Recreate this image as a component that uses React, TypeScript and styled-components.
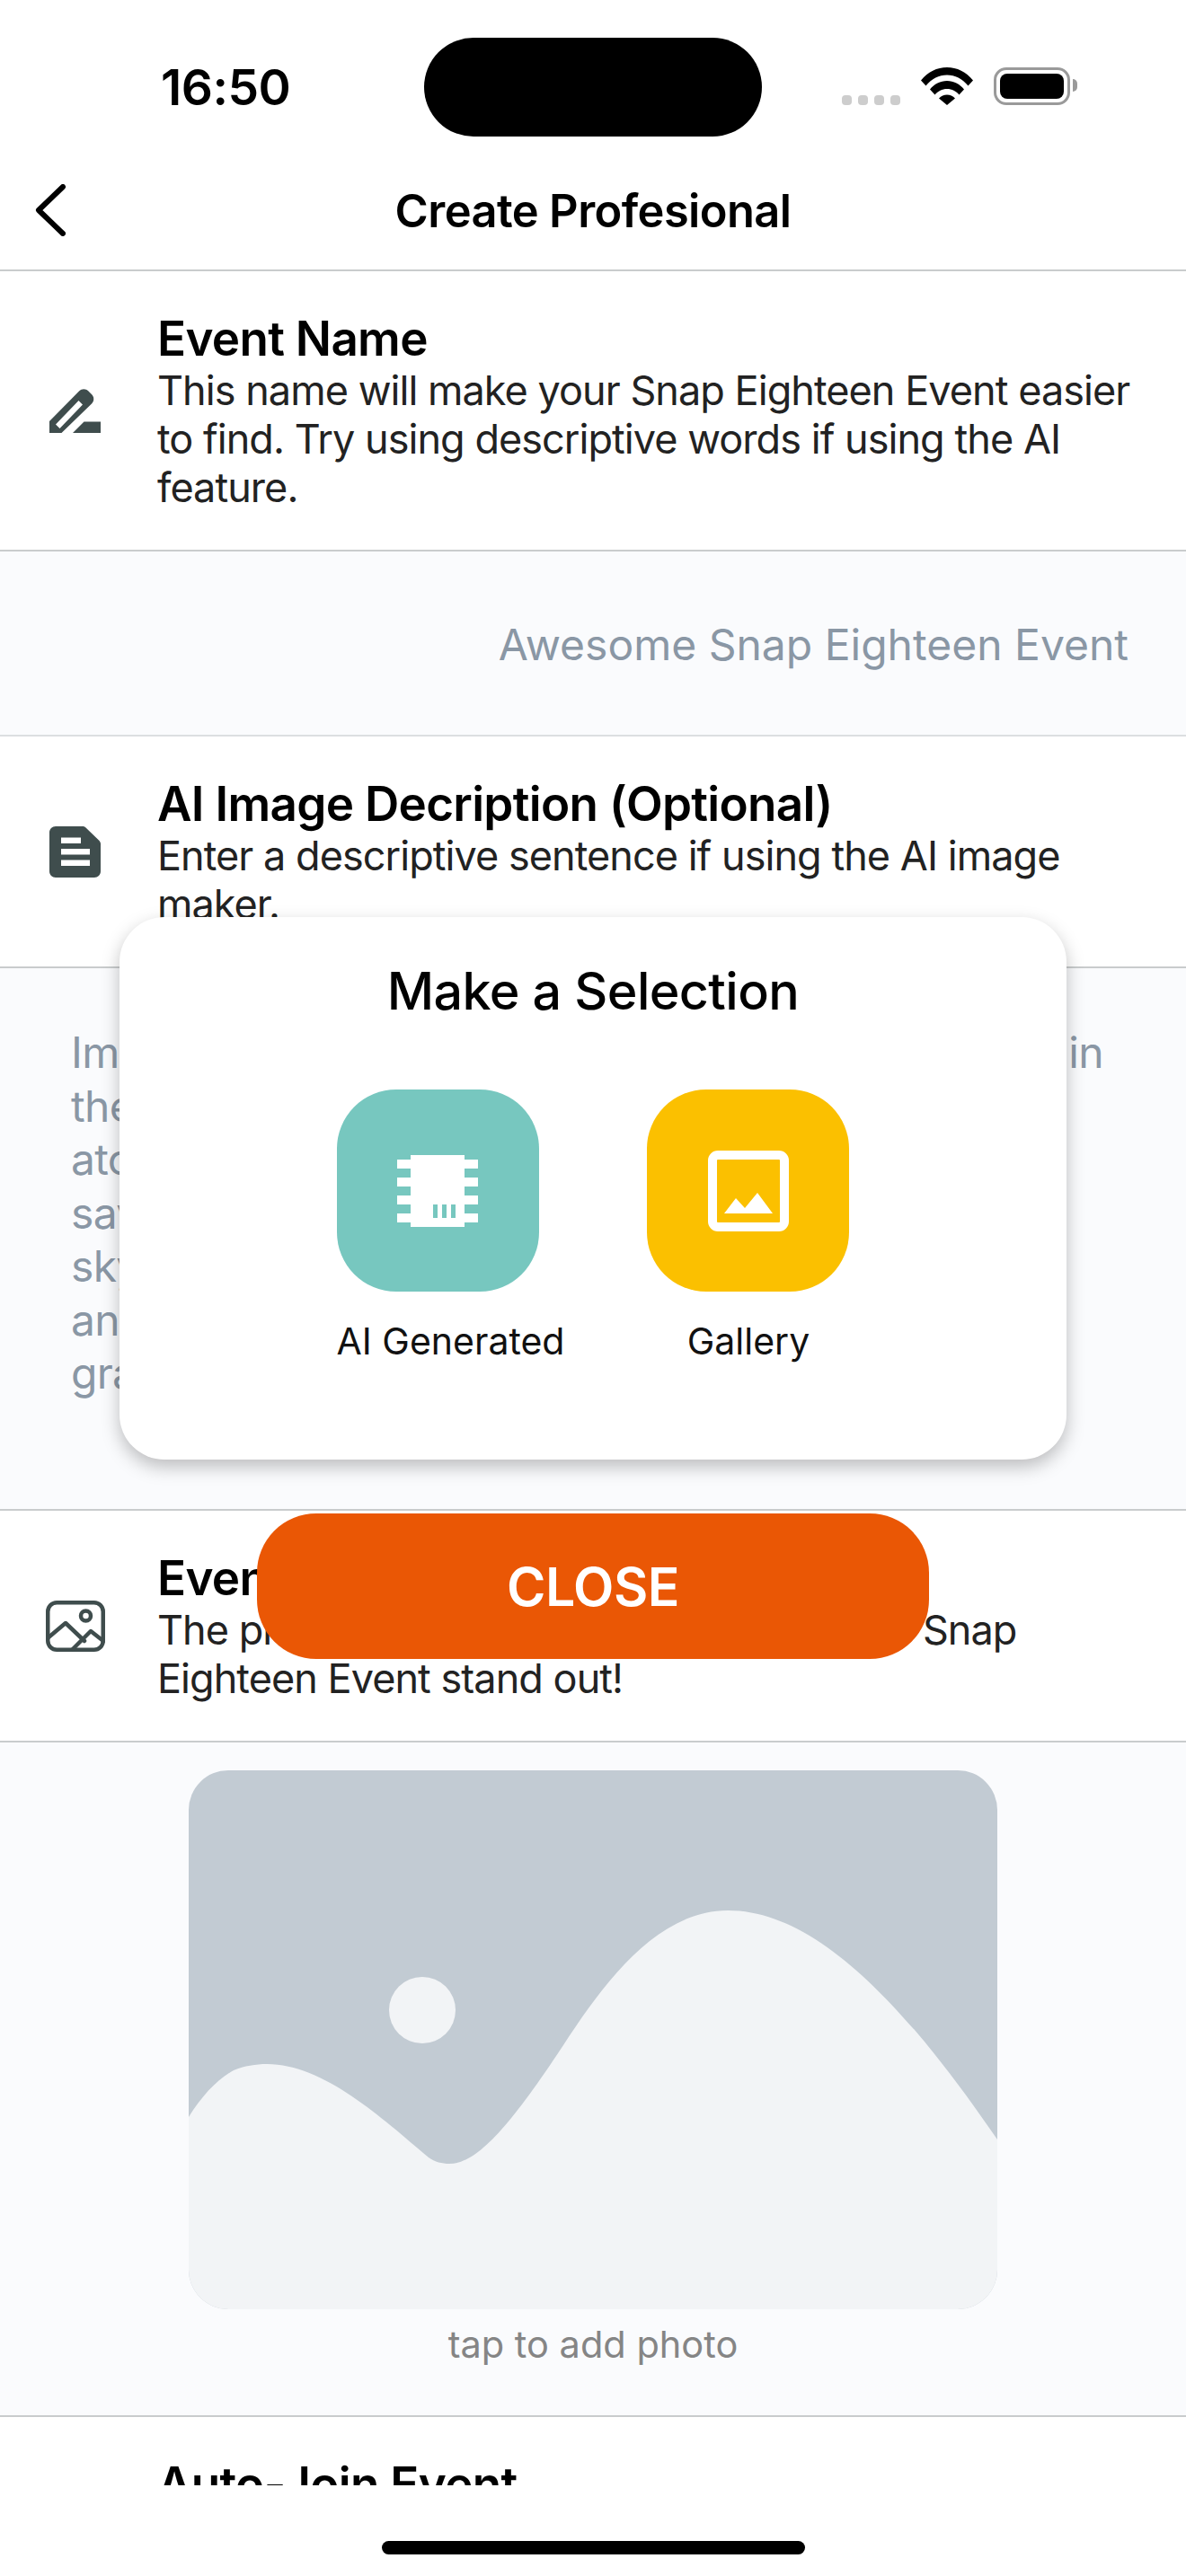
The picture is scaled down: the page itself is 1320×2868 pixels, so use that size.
import React from "react";
import styled, { createGlobalStyle } from "styled-components";

const Global = createGlobalStyle`
  html, body { margin: 0; padding: 0; background: #fff; }
  body { font-family: Inter, "Liberation Sans", sans-serif; }
`;

const Page = styled.div`
  position: relative;
  width: 1320px;
  height: 2868px;
  display: flex;
  flex-direction: column;
  overflow: hidden;
  background: #fff;
`;

const StatusBar = styled.div`
  height: 170px;
  flex: none;
  box-sizing: border-box;
  padding: 42px 123px 0 179px;
  display: flex;
  align-items: flex-start;
`;

const Time = styled.div`
  width: 293px;
  height: 110px;
  display: flex;
  align-items: center;
  font-size: 55px;
  font-weight: 600;
  letter-spacing: -0.5px;
  color: #000;
`;

const Island = styled.div`
  width: 376px;
  height: 110px;
  border-radius: 55px;
  background: #000;
`;

const StatusIcons = styled.div`
  margin-left: 89px;
  padding-top: 33px;
  display: flex;
  align-items: flex-start;
`;

const Dots = styled.div`
  display: flex;
  gap: 7px;
  margin-top: 31px;
  margin-right: 23px;
`;

const Dot = styled.span`
  width: 11px;
  height: 11px;
  border-radius: 4px;
  background: #cdcdcd;
`;

const Battery = styled.div`
  position: relative;
  margin-left: 23px;
  width: 85px;
  height: 42px;
  box-sizing: border-box;
  border: 3px solid #9a9a9a;
  border-radius: 14px;
  padding: 4px;

  &::before {
    content: "";
    display: block;
    width: 100%;
    height: 100%;
    border-radius: 8px;
    background: #000;
  }

  &::after {
    content: "";
    position: absolute;
    right: -11px;
    top: 10px;
    width: 5px;
    height: 14px;
    border-radius: 0 6px 6px 0;
    background: #9a9a9a;
  }
`;

const Header = styled.div`
  position: relative;
  height: 132px;
  flex: none;
  box-sizing: border-box;
  border-bottom: 2px solid #c9cccd;
  display: flex;
  align-items: center;
  justify-content: center;
  padding-bottom: 2px;
`;

const BackIcon = styled.svg`
  position: absolute;
  left: 38px;
  top: 35px;
`;

const Title = styled.div`
  font-size: 50.6px;
  font-weight: 600;
  letter-spacing: -0.6px;
  color: #000;
`;

const Scroll = styled.div`
  flex: 1;
  min-height: 0;
  overflow: hidden;
`;

const Section = styled.div`
  display: flex;
  align-items: center;
  padding: 0 40px 0 50px;
  border-bottom: 2px solid #c9cccd;
`;

const IconSlot = styled.div`
  width: 67px;
  flex: none;
  margin-right: 58px;
  display: flex;
  justify-content: center;
`;

const SectionText = styled.div`
  flex: 1;
  padding: 45px 0 42px;
`;

const SectionTitle = styled.div`
  font-size: 53px;
  line-height: 60px;
  font-weight: 600;
  letter-spacing: -0.7px;
  color: #000;
  margin-bottom: 1px;
`;

const SectionBody = styled.div`
  font-size: 45px;
  line-height: 54px;
  letter-spacing: -0.95px;
  color: #222;
`;

const NameField = styled.div`
  height: 206px;
  box-sizing: border-box;
  background: #fafbfd;
  border-bottom: 2px solid #dcdfe1;
  padding: 2px 64px 0 0;
  display: flex;
  align-items: center;
  justify-content: flex-end;
  font-size: 48px;
  color: #8a97a5;
`;

const DescriptionField = styled.div`
  background: #fafbfd;
  border-bottom: 2px solid #c9cccd;
  padding: 64px 60px 121.5px 79px;
  font-size: 48px;
  line-height: 59.5px;
  letter-spacing: -0.7px;
  color: #8a97a5;
  white-space: nowrap;
`;

const PhotoField = styled.div`
  background: #fafbfd;
  border-bottom: 2px solid #c9cccd;
  padding: 31px 0 0;
  height: 751px;
  box-sizing: border-box;
  display: flex;
  flex-direction: column;
  align-items: center;
`;

const PhotoBox = styled.svg`
  display: block;
  width: 900px;
  height: 600px;
  border-radius: 44px;
`;

const PhotoHint = styled.div`
  margin-top: 14px;
  font-size: 41.5px;
  line-height: 50px;
  color: #858585;
`;

const Footer = styled.div`
  height: 101px;
  flex: none;
  display: flex;
  justify-content: center;
  padding-top: 62px;
  box-sizing: border-box;
`;

const HomeBar = styled.div`
  width: 471px;
  height: 15px;
  border-radius: 8px;
  background: #000;
`;

const Modal = styled.div`
  position: absolute;
  left: 133px;
  top: 1021px;
  width: 1054px;
  height: 604px;
  box-sizing: border-box;
  background: #fff;
  border-radius: 50px;
  box-shadow: 0 8px 20px rgba(0, 0, 0, 0.25);
  padding-top: 48px;
  display: flex;
  flex-direction: column;
  align-items: center;
`;

const ModalTitle = styled.div`
  font-size: 57.4px;
  line-height: 68px;
  font-weight: 500;
  letter-spacing: -0.6px;
  color: #000;
`;

const Options = styled.div`
  margin-top: 76px;
  display: flex;
  gap: 92px;
`;

const Option = styled.div<{ $center?: boolean }>`
  display: flex;
  flex-direction: column;
  align-items: ${({ $center }) => ($center ? "center" : "flex-start")};
`;

const OptionTile = styled.div<{ $color: string }>`
  width: 225px;
  height: 225px;
  border-radius: 66px;
  background: ${({ $color }) => $color};
  display: flex;
  align-items: center;
  justify-content: center;
`;

const OptionLabel = styled.div`
  margin-top: 30px;
  font-size: 41px;
  line-height: 50px;
  color: #111;
  white-space: nowrap;
`;

const CloseButton = styled.button`
  position: absolute;
  left: 286px;
  top: 1685px;
  width: 748px;
  height: 162px;
  border: 0;
  padding: 0;
  border-radius: 66px;
  background: #ea5705;
  color: #fff;
  font-family: inherit;
  font-size: 59px;
  font-weight: 600;
  letter-spacing: -0.5px;
`;

const iconColor = "#3f4d4d";

const App: React.FC = () => {
  return (
    <Page>
      <Global />
      <StatusBar>
        <Time>16:50</Time>
        <Island />
        <StatusIcons>
          <Dots>
            <Dot />
            <Dot />
            <Dot />
            <Dot />
          </Dots>
          <svg width="58" height="42" viewBox="0 0 58 42">
            <path d="M0 14.500C7.500 5 18 0 29 0s21.500 5 29 14.500l-5.500 6C46 12.500 38 8.500 29 8.500S12 12.500 5.500 20.500Z" fill="#000" />
            <path d="M10 24.500C15 18.500 21.500 15 29 15s14 3.500 19 9.500l-5.500 6C39 26.500 34.500 24 29 24s-10 2.500-13.500 6.500Z" fill="#000" />
            <path d="M20 34.500c2.500-2.500 5.500-4 9-4s6.500 1.500 9 4L29 42Z" fill="#000" />
          </svg>
          <Battery />
        </StatusIcons>
      </StatusBar>

      <Header>
        <BackIcon width="36" height="58" viewBox="0 0 36 58">
          <path d="M32 3 5 29l27 26" fill="none" stroke="#000" strokeWidth="6" strokeLinecap="round" strokeLinejoin="round" />
        </BackIcon>
        <Title>Create Profesional</Title>
      </Header>

      <Scroll>
        <Section>
          <IconSlot>
            <svg width="57" height="50" viewBox="0 0 57 50">
              <path fillRule="evenodd" fill={iconColor} d="M0 37 33 3.500c3-3 7.500-3 10.500 0L47 7c3 3 3 7.500 0 10.500L13.500 50H0ZM7 40.500l4.500 4.500L37 18.500 32.500 14Z" />
              <path fill={iconColor} d="M26 50 38.500 37.500H57V50Z" />
            </svg>
          </IconSlot>
          <SectionText>
            <SectionTitle>Event Name</SectionTitle>
            <SectionBody>
              This name will make your Snap Eighteen Event easier to find. Try using descriptive words if using the AI feature.
            </SectionBody>
          </SectionText>
        </Section>
        <NameField>Awesome Snap Eighteen Event</NameField>

        <Section>
          <IconSlot>
            <svg width="57" height="57" viewBox="0 0 57 57">
              <path fillRule="evenodd" fill={iconColor} d="M7 0h30c1.500 0 2.500.5 3.500 1.500L55 15.500c1 1 2 2.500 2 4V50c0 4-3 7-7 7H7c-4 0-7-3-7-7V7c0-4 3-7 7-7ZM13 12.500v6.500h22v-6.500ZM13 25v6.500h32V25ZM13 37.500V44h32v-6.500Z" />
            </svg>
          </IconSlot>
          <SectionText>
            <SectionTitle>AI Image Decription (Optional)</SectionTitle>
            <SectionBody>Enter a descriptive sentence if using the AI image maker.</SectionBody>
          </SectionText>
        </Section>
        <DescriptionField>
          Imagine a couple at their wedding, dancing slowly in
          <br />
          the warm glow of string lights on a rooftop
          <br />
          atop a quiet city, with friends laughing nearby
          <br />
          savoring the evening, a colorful sunset
          <br />
          sky behind them, soft flowers on every table
          <br />
          and candles, captured in a bright, joyful and
          <br />
          graceful style.
        </DescriptionField>

        <Section>
          <IconSlot>
            <svg width="66" height="57" viewBox="0 0 66 57">
              <g fill="none" stroke={iconColor} strokeWidth="4.500" strokeLinejoin="round" strokeLinecap="round">
                <rect x="2.250" y="2.250" width="61.500" height="52.500" rx="10" />
                <circle cx="44.500" cy="17" r="5.500" />
                <path d="M3 41 22 25l21 20" />
                <path d="M30 54l20-20 14 11" />
              </g>
            </svg>
          </IconSlot>
          <SectionText>
            <SectionTitle>Event Image</SectionTitle>
            <SectionBody>The photo you choose here will help your Snap Eighteen Event stand out!</SectionBody>
          </SectionText>
        </Section>
        <PhotoField>
          <PhotoBox viewBox="0 0 900 600">
            <rect width="900" height="600" fill="#c2cbd3" />
            <circle cx="260" cy="267" r="37" fill="#f2f4f6" />
            <path
              fill="#f2f4f6"
              d="M0 386C15 362 32 344 50 334C62 329 75 327 87 327C150 327 215 387 267 431C274 436 282 438 290 438C320 438 355 400 417 306C460 240 520 156 600 156C700 156 800 265 900 411V600H0Z"
            />
          </PhotoBox>
          <PhotoHint>tap to add photo</PhotoHint>
        </PhotoField>

        <Section>
          <IconSlot />
          <SectionText>
            <SectionTitle>Auto-Join Event</SectionTitle>
          </SectionText>
        </Section>
      </Scroll>

      <Footer>
        <HomeBar />
      </Footer>

      <Modal>
        <ModalTitle>Make a Selection</ModalTitle>
        <Options>
          <Option>
            <OptionTile $color="#77c7bf">
              <svg width="90" height="80" viewBox="0 0 90 80">
                <path
                  fillRule="evenodd"
                  fill="#fff"
                  d="M15 0h60v5h15v10H75v10h15v10H75v10h15v10H75v10h15v10H75v5H15v-5H0V65h15V55H0V45h15V35H0V25h15V15H0V5h15ZM40 55v15h5V55ZM50 55v15h5V55ZM60 55v15h5V55Z"
                />
              </svg>
            </OptionTile>
            <OptionLabel>AI Generated</OptionLabel>
          </Option>
          <Option $center>
            <OptionTile $color="#fbc000">
              <svg width="90" height="90" viewBox="0 0 90 90">
                <rect x="5" y="5" width="80" height="80" rx="6" fill="none" stroke="#fff" strokeWidth="10" />
                <path d="M18 70 31 53l10 11 14-17 17 23Z" fill="#fff" />
              </svg>
            </OptionTile>
            <OptionLabel>Gallery</OptionLabel>
          </Option>
        </Options>
      </Modal>
      <CloseButton>CLOSE</CloseButton>
    </Page>
  );
};

export default App;
